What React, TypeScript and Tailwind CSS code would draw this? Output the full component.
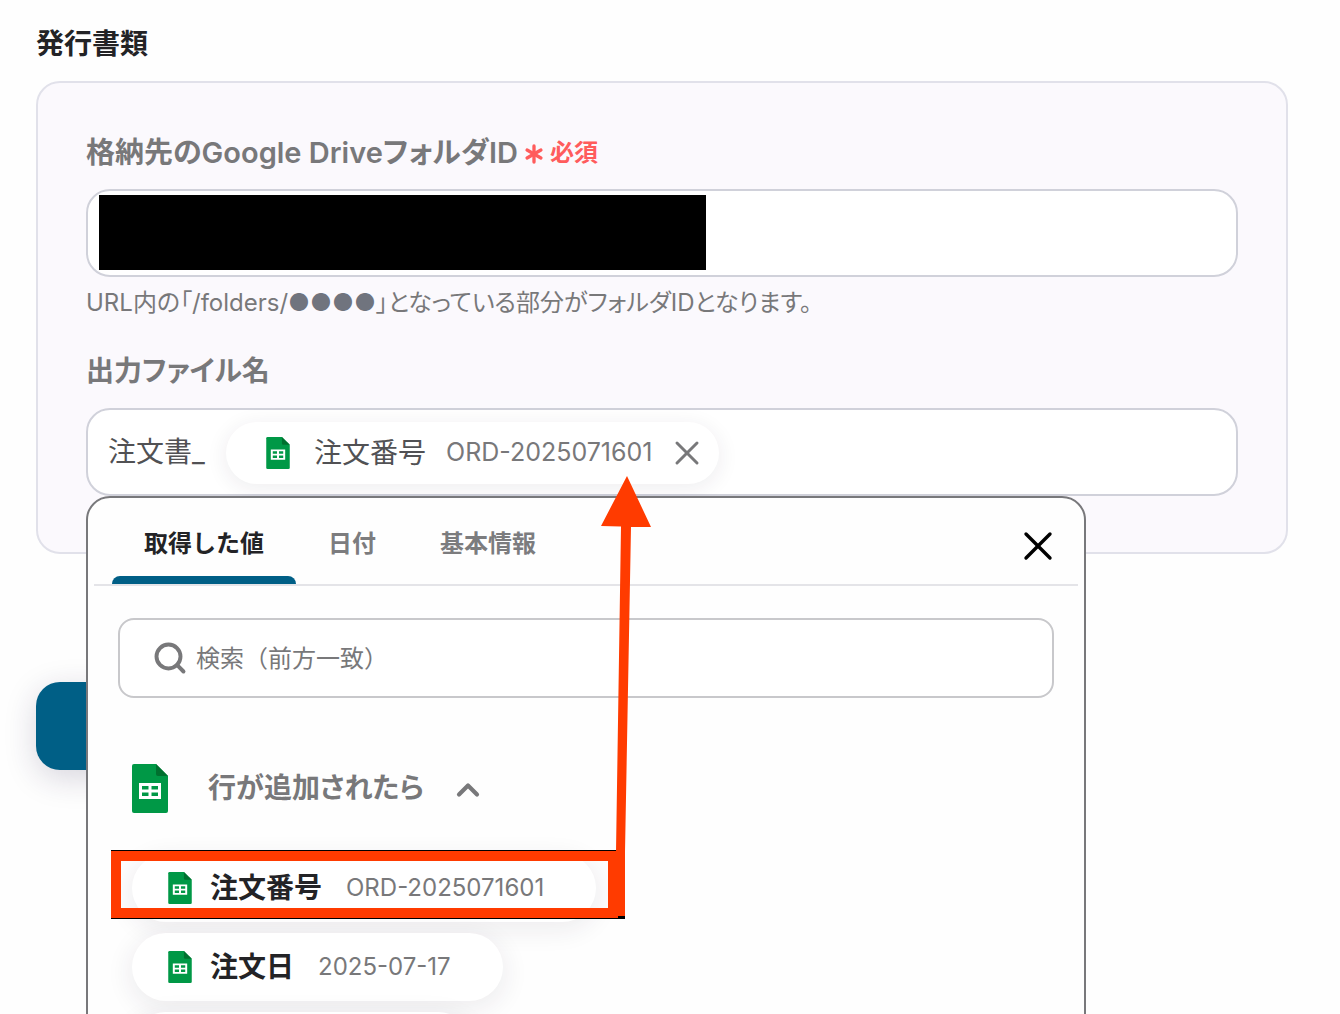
import { Asterisk, ChevronUp, Search, X } from "lucide-react";

function SheetIcon({ className }: { className: string }) {
  return (
    <svg viewBox="0 0 36 49" className={className} aria-hidden="true">
      <path d="M2 0H24L36 12V47a2 2 0 0 1-2 2H2a2 2 0 0 1-2-2V2a2 2 0 0 1 2-2Z" fill="#009846" />
      <path d="M24 0L36 12H26a2 2 0 0 1-2-2Z" fill="#00702f" />
      <path
        d="M7 19H29V35H7ZM10 22V25.500H16.500V22ZM19.500 22V25.500H26V22ZM10 28.500V32H16.500V28.500ZM19.500 28.500V32H26V28.500Z"
        fill="#fff"
        fillRule="evenodd"
      />
    </svg>
  );
}

function ValueChip({ name, value }: { name: string; value: string }) {
  return (
    <button
      type="button"
      className="flex h-[68px] items-center rounded-full bg-white pr-[52px] pl-9 shadow-[0_6px_24px_4px_rgba(40,30,50,0.07)]"
    >
      <SheetIcon className="h-8 w-6 shrink-0" />
      <span className="ml-[18px] text-[28px] leading-10 font-semibold text-[#232326]">{name}</span>
      <span className="ml-6 text-2xl text-[#78787a]">{value}</span>
    </button>
  );
}

function CalloutArrow() {
  return (
    <svg
      viewBox="0 0 542 446"
      className="pointer-events-none absolute top-[-22px] left-[22px] h-[446px] w-[542px]"
      aria-hidden="true"
    >
      <path d="M1 374.500H507M1 442.500H515" stroke="#000" strokeWidth="1" fill="none" />
      <path d="M1 375H515V442H1ZM11 385V432H498V385Z" fill="#ff3b00" fillRule="evenodd" />
      <path d="M517 0L491 50L511 50.500L506 376H515L521 51L541 51Z" fill="#ff3b00" />
      <path d="M508 440H515V443H508Z" fill="#000" />
    </svg>
  );
}

const tabs = [
  { label: "取得した値", active: true },
  { label: "日付", active: false },
  { label: "基本情報", active: false },
];

function ValuePicker() {
  return (
    <div className="absolute top-full left-[-2px] z-10 mt-0.5 h-[620px] w-[1000px] rounded-3xl border-2 border-[#78787b] bg-[#fefefe]">
      <div className="mx-1.5 flex h-[88px] items-stretch border-b-2 border-[#e4e4e8] pr-4 pl-[18px]">
        <div role="tablist" className="flex flex-1">
          {tabs.map((tab) => (
            <button
              key={tab.label}
              type="button"
              role="tab"
              aria-selected={tab.active}
              className={
                tab.active
                  ? "relative px-8 pt-1.5 text-2xl font-semibold text-[#232326] after:absolute after:inset-x-0 after:bottom-0 after:h-2 after:rounded-t-lg after:bg-[#005f86]"
                  : "px-8 pt-1.5 text-2xl font-semibold text-[#7c7c7e]"
              }
            >
              {tab.label}
            </button>
          ))}
        </div>
        <button type="button" aria-label="閉じる" className="mt-2.5 text-black">
          <X className="size-12" strokeWidth={1.7} />
        </button>
      </div>

      <div className="px-[30px] pt-8">
        <label className="flex h-20 items-center rounded-2xl border-2 border-[#c8c8cb] bg-white pl-8">
          <Search className="size-9 text-[#78787a]" strokeWidth={2.6} />
          <input
            type="text"
            aria-label="検索"
            placeholder="検索（前方一致）"
            className="ml-2 flex-1 pt-0.5 text-2xl outline-none placeholder:text-[#78787a]"
          />
        </label>

        <button type="button" aria-expanded="true" className="mt-[60px] ml-3.5 flex h-[60px] items-center">
          <SheetIcon className="h-[49px] w-9" />
          <span className="ml-10 text-[28px] font-semibold text-[#78787a] [font-feature-settings:'palt']">
            行が追加されたら
          </span>
          <ChevronUp className="mt-1 ml-[26px] size-9 text-[#78787a]" strokeWidth={2.8} />
        </button>

        <div className="mt-9 ml-3.5 flex flex-col items-start gap-[11px]">
          <ValueChip name="注文番号" value="ORD-2025071601" />
          <ValueChip name="注文日" value="2025-07-17" />
          <div className="h-[68px] w-[340px] rounded-full bg-white shadow-[0_6px_24px_4px_rgba(40,30,50,0.07)]" />
        </div>
      </div>
      <CalloutArrow />
    </div>
  );
}

export default function App() {
  return (
    <main className="h-screen overflow-hidden bg-[#fefefe] pr-[52px] pl-9 font-['Inter','Noto_Sans_CJK_JP',sans-serif]">
      <h1 className="pt-6 text-[28px] leading-10 font-semibold text-[#232326]">発行書類</h1>

      <section className="mt-[17px] rounded-3xl border-2 border-[#e1e1ea] bg-[#fbf9fd] px-12 pt-12 pb-14">
        <label
          htmlFor="folder-id"
          className="flex items-center text-[29px] leading-11 font-semibold text-[#78787a] [font-feature-settings:'palt']"
        >
          格納先のGoogle DriveフォルダID
          <Asterisk className="mt-0.5 size-8 text-[#ff5c5c]" strokeWidth={2.5} />
          <span className="text-2xl text-[#ff5c5c]">必須</span>
        </label>
        <div className="mt-3.5 flex h-[88px] items-start rounded-3xl border-2 border-[#d0d1da] bg-white pt-1 pl-[11px]">
          <input id="folder-id" type="text" className="h-[75px] w-[607px] bg-black text-black outline-none" />
        </div>
        <p className="mt-2 text-2xl leading-9 text-[#78787a] [font-feature-settings:'palt']">
          URL内の「/folders/<span className="text-[#70747e]">●●●●</span>」となっている部分がフォルダIDとなります。
        </p>

        <label
          htmlFor="file-name"
          className="mt-7 block text-[28px] leading-11 font-semibold text-[#78787a] [font-feature-settings:'palt']"
        >
          出力ファイル名
        </label>
        <div className="relative mt-[15px] flex h-[88px] items-center rounded-3xl border-2 border-[#d0d1da] bg-white pl-5">
          <input
            id="file-name"
            type="text"
            defaultValue="注文書_"
            className="w-[104px] text-[28px] text-[#515154] outline-none"
          />
          <div className="mt-0.5 ml-3.5 flex h-[62px] items-center rounded-full bg-white pr-3 pl-10 shadow-[0_4px_20px_2px_rgba(40,30,50,0.07)]">
            <SheetIcon className="h-8 w-6" />
            <span className="ml-6 text-[28px] text-[#515154]">注文番号</span>
            <span className="ml-5 text-[25px] text-[#78787a]">ORD-2025071601</span>
            <button type="button" aria-label="注文番号を削除" className="ml-[15px] text-[#78787a]">
              <X className="size-10" strokeWidth={1.8} />
            </button>
          </div>
          <ValuePicker />
        </div>
      </section>

      <button
        type="button"
        aria-label="保存"
        className="mt-32 block h-[88px] w-60 rounded-3xl bg-[#005f86] shadow-[0_8px_32px_rgba(40,30,70,0.18)]"
      />
    </main>
  );
}
